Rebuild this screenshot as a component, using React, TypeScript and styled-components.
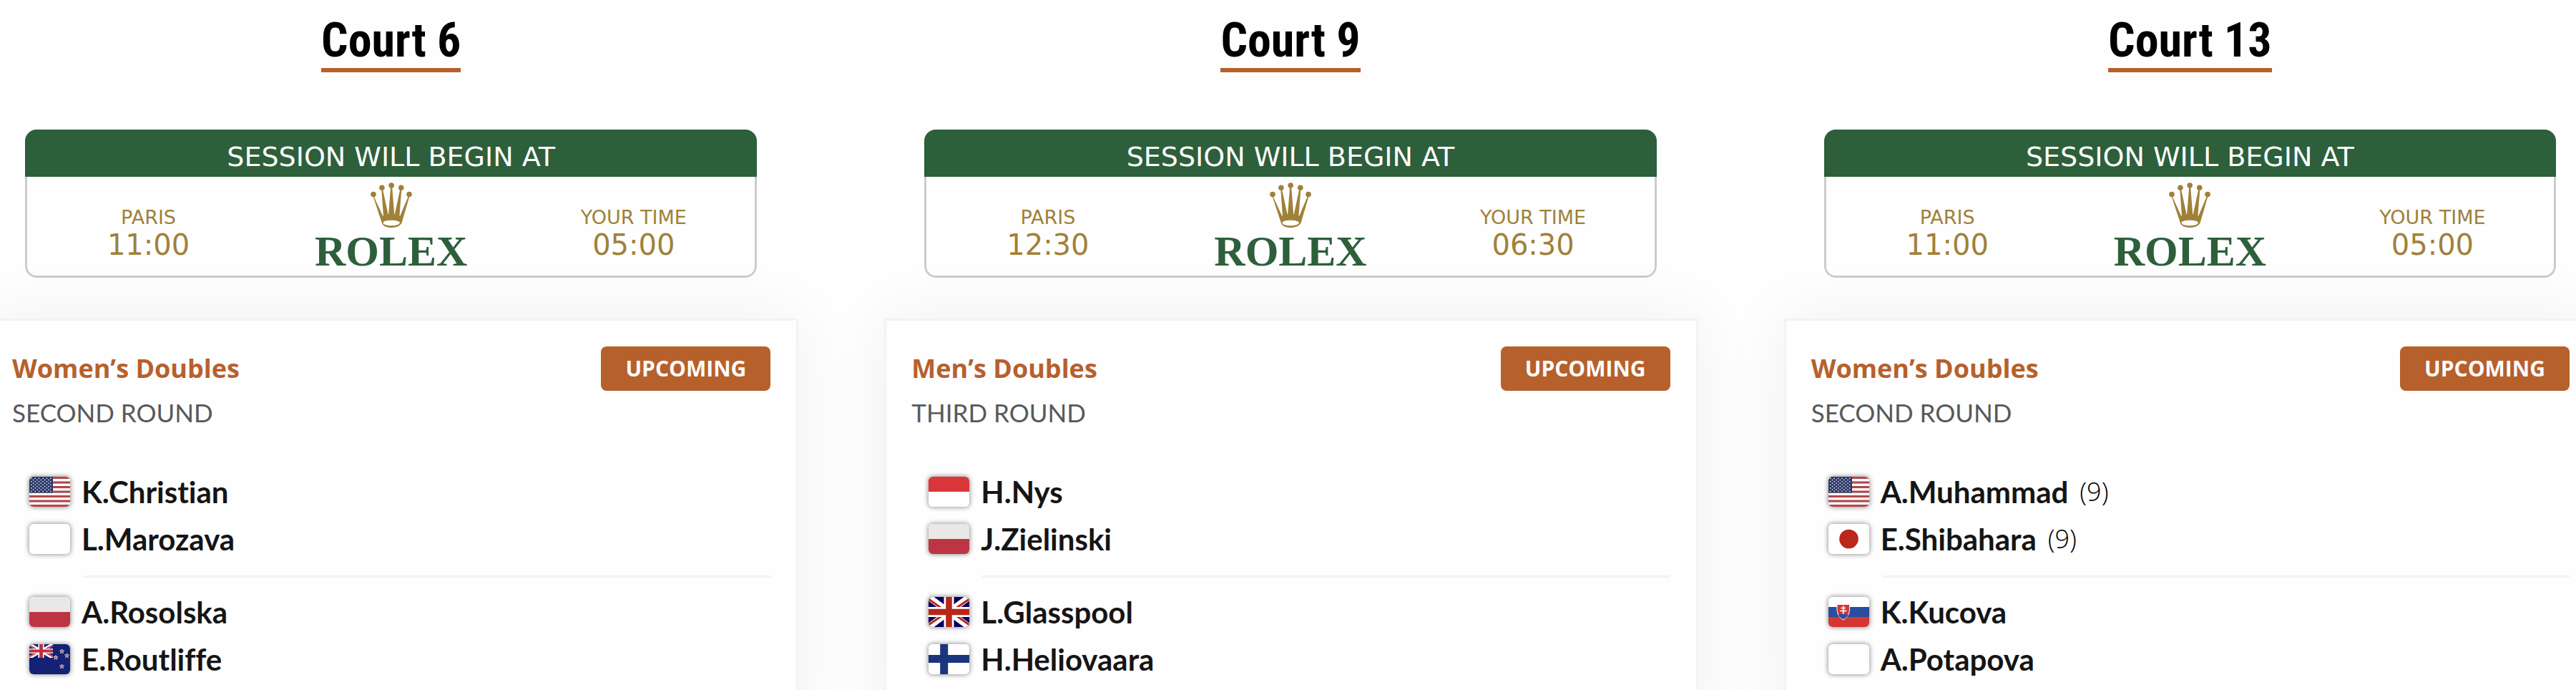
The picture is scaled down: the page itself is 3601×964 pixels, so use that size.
import React from "react";
import styled, { createGlobalStyle } from "styled-components";

const GlobalStyle = createGlobalStyle`
  *, *::before, *::after { box-sizing: border-box; }
  body { margin: 0; background: #fefefe; color: #151515; overflow: hidden; }
  h2, h3, p, ul { margin: 0; padding: 0; }
`;

const Page = styled.main`
  height: 100vh;
  overflow: hidden;
`;

const Track = styled.div`
  display: grid;
  grid-template-columns: repeat(3, minmax(0, 1fr));
  column-gap: 120px;
  margin: 0 -30px 0 -21px;
`;

const Court = styled.section`
  display: flex;
  flex-direction: column;
`;

const CourtHead = styled.header`
  display: flex;
  flex-direction: column;
  align-items: center;
  padding: 18px 58px 57px 56px;
`;

const CourtName = styled.h2`
  font: 700 66px/77px "Roboto Condensed", "Liberation Sans Narrow", Roboto, sans-serif;
  color: #000;
  border-bottom: 6px solid #b6602c;
  margin-bottom: 80px;
`;

const Banner = styled.div`
  width: 100%;
  border-radius: 16px;
  overflow: hidden;
`;

const BannerTitle = styled.p`
  padding: 14px 0 4px;
  background: #2d5f3b;
  color: #fff;
  text-align: center;
  font: 400 38px/48px "DejaVu Sans", sans-serif;
`;

const BannerBody = styled.div`
  display: grid;
  grid-template-columns: repeat(3, 1fr);
  height: 141px;
  border: 3px solid #cbcbcb;
  border-top: 0;
  border-radius: 0 0 16px 16px;
`;

const Clock = styled.div`
  display: flex;
  flex-direction: column;
  align-items: center;
  padding-top: 40px;
  color: #9f8139;
  font-family: "DejaVu Sans", sans-serif;
`;

const ClockLabel = styled.span`
  font-size: 27px;
  line-height: 34px;
`;

const ClockTime = styled.time`
  font-size: 40px;
  line-height: 42px;
`;

const Brand = styled.div`
  display: flex;
  flex-direction: column;
  align-items: center;
  padding-top: 8px;
`;

const BrandName = styled.span`
  font: 700 60px/66px "Liberation Serif", serif;
  color: #2d5f3b;
`;

const Card = styled.article`
  border: 3px solid #f3f3f3;
  background: #fefefe;
  box-shadow: 0 0 90px rgba(0, 0, 0, 0.06);
  padding: 36px 36px 60px 35px;
`;

const CardHead = styled.div`
  display: flex;
  justify-content: space-between;
  align-items: center;
`;

const EventName = styled.h3`
  font: 700 36px/62px "Open Sans", sans-serif;
  color: #b6602c;
`;

const Status = styled.span`
  min-width: 237px;
  padding: 0 32px;
  border-radius: 8px;
  background: #b6602c;
  color: #fff;
  text-align: center;
  font: 700 30px/62px "Open Sans", sans-serif;
`;

const Round = styled.p`
  font: 400 35px/60px Lato, sans-serif;
  color: #58595b;
  margin-bottom: 48px;
`;

const Team = styled.ul`
  list-style: none;
`;

const Divider = styled.hr`
  margin: 18px 0 15px 99px;
  border: 0;
  height: 3px;
  background: #f3f3f3;
`;

const Player = styled.li`
  display: flex;
  align-items: center;
  height: 66px;
  padding-left: 24px;
  font: 700 42px/66px Lato, sans-serif;
  font-variant-ligatures: none;
  color: #151515;
`;

const FlagBox = styled.span`
  display: block;
  width: 57px;
  height: 42px;
  margin-right: 16px;
  border-radius: 6px;
  overflow: hidden;
  background: #fff;
  box-shadow: 0 0 6px 1px rgba(0, 0, 0, 0.4);
  & > svg { display: block; width: 100%; height: 100%; }
`;

const Seed = styled.span`
  margin-left: 16px;
  font: 300 36px/66px "Open Sans", sans-serif;
  color: #000;
`;

type Country = "us" | "pl" | "nz" | "mc" | "gb" | "fi" | "jp" | "sk" | "none";

const rows = [0, 1, 2, 3, 4, 5, 6];

const UnionJack = ({ blue, red }: { blue: string; red: string }) => (
  <>
    <rect width="57" height="42" fill={blue} />
    <path d="M0 0L57 42M57 0L0 42" stroke="#fff" strokeWidth="9" />
    <path d="M0 3L24 20M33 22L57 39M57 3L35 18M22 24L0 39" stroke={red} strokeWidth="3" />
    <path d="M28.500 0V42M0 21H57" stroke="#fff" strokeWidth="14" />
    <path d="M28.500 0V42M0 21H57" stroke={red} strokeWidth="8.500" />
  </>
);

const Star = ({ x, y }: { x: number; y: number }) => (
  <path
    transform={`translate(${x} ${y})`}
    d="M0 -3L.8 -1H3L1.200 .4L1.900 2.700L0 1.300L-1.900 2.700L-1.200 .4L-3 -1H-.8Z"
    fill="#cf3340"
    stroke="#fff"
    strokeWidth=".7"
  />
);

const flags: Record<Country, React.ReactNode> = {
  none: null,
  us: (
    <>
      <rect width="57" height="42" fill="#fff" />
      {rows.map((r) => (
        <rect key={r} y={r * 6.5} width="57" height="3.100" fill="#b0484b" />
      ))}
      <rect width="33" height="22.500" fill="#2a3768" />
      {[0, 1, 2, 3, 4, 5, 6, 7, 8].map((r) =>
        rows.slice(0, r % 2 ? 5 : 6).map((c) => (
          <circle key={`${r}-${c}`} cx={(r % 2 ? 5.5 : 2.8) + c * 5.4} cy={2.4 + r * 2.25} r=".8" fill="#fff" />
        )),
      )}
    </>
  ),
  pl: (
    <>
      <rect width="57" height="21" fill="#e9e8e7" />
      <rect y="21" width="57" height="21" fill="#bd3544" />
    </>
  ),
  mc: (
    <>
      <rect width="57" height="42" fill="#fff" />
      <rect width="57" height="21" fill="#d9363c" />
    </>
  ),
  nz: (
    <>
      <rect width="57" height="42" fill="#132274" />
      <svg x="0" y="0" width="33" height="19" viewBox="0 0 57 42" preserveAspectRatio="none">
        <UnionJack blue="#132274" red="#c22f3c" />
      </svg>
      <Star x={45.5} y={10} />
      <Star x={52.5} y={16} />
      <Star x={37} y={18.5} />
      <Star x={45.5} y={31} />
    </>
  ),
  gb: <UnionJack blue="#06035f" red="#b82719" />,
  fi: (
    <>
      <rect width="57" height="42" fill="#fff" />
      <path d="M21.700 0V42M0 20.500H57" stroke="#1b357c" strokeWidth="11" />
    </>
  ),
  jp: (
    <>
      <rect width="57" height="42" fill="#fff" />
      <circle cx="28.500" cy="21" r="13.300" fill="#bb271a" />
    </>
  ),
  sk: (
    <>
      <rect width="57" height="42" fill="#fff" />
      <rect y="14" width="57" height="14" fill="#2b4d9f" />
      <rect y="28" width="57" height="14" fill="#d43732" />
      <path d="M11.500 10H30C30.500 20 30 27 20.700 32.500C11.500 27 11 20 11.500 10Z" fill="#fff" />
      <path d="M12.500 11H29C29.500 20 29 26 20.700 31.300C12.500 26 12 20 12.500 11Z" fill="#d43732" />
      <path d="M14 25.500C15.500 23.500 17.300 23.800 18 24.800C19.500 22.500 22 22.500 23.400 24.800C24.500 23.600 26 23.600 27.500 25.500C26 28 24 29.600 20.700 31.300C17.500 29.600 15.500 28 14 25.500Z" fill="#2b4d9f" />
      <path d="M20.700 12.500V24M17.500 15.500H24M16 19.500H25.500" stroke="#fff" strokeWidth="1.600" />
    </>
  ),
};

const Flag = ({ country }: { country: Country }) => (
  <FlagBox>
    <svg viewBox="0 0 57 42" preserveAspectRatio="none" aria-hidden="true">
      {flags[country]}
    </svg>
  </FlagBox>
);

const Crown = () => (
  <svg width="58" height="63" viewBox="0 0 175 190" fill="#9f8139" aria-hidden="true">
    <circle cx="12" cy="50" r="11.500" />
    <circle cx="48" cy="22" r="11.500" />
    <circle cx="88" cy="12" r="11.500" />
    <circle cx="129" cy="22" r="11.500" />
    <circle cx="163" cy="50" r="11.500" />
    <path
      fillRule="evenodd"
      d="M12 54L52 142L54 138L46 26H51L74 134L76 132L85 18H91L100 132L102 134L125 26H131L122 138L124 142L161 54L165 56L132 168C128 182 108 190 88 190C66 190 50 182 47 168L10 56ZM88 159C66 159 53 163 53 170C53 177 66 182 88 182C110 182 123 177 123 170C123 163 110 159 88 159Z"
    />
  </svg>
);

type Entry = { name: string; country: Country; seed?: number };

type CourtData = {
  court: string;
  paris: string;
  local: string;
  event: string;
  round: string;
  teams: [Entry[], Entry[]];
};

const courts: CourtData[] = [
  {
    court: "Court 6",
    paris: "11:00",
    local: "05:00",
    event: "Women’s Doubles",
    round: "SECOND ROUND",
    teams: [
      [{ name: "K.Christian", country: "us" }, { name: "L.Marozava", country: "none" }],
      [{ name: "A.Rosolska", country: "pl" }, { name: "E.Routliffe", country: "nz" }],
    ],
  },
  {
    court: "Court 9",
    paris: "12:30",
    local: "06:30",
    event: "Men’s Doubles",
    round: "THIRD ROUND",
    teams: [
      [{ name: "H.Nys", country: "mc" }, { name: "J.Zielinski", country: "pl" }],
      [{ name: "L.Glasspool", country: "gb" }, { name: "H.Heliovaara", country: "fi" }],
    ],
  },
  {
    court: "Court 13",
    paris: "11:00",
    local: "05:00",
    event: "Women’s Doubles",
    round: "SECOND ROUND",
    teams: [
      [{ name: "A.Muhammad", country: "us", seed: 9 }, { name: "E.Shibahara", country: "jp", seed: 9 }],
      [{ name: "K.Kucova", country: "sk" }, { name: "A.Potapova", country: "none" }],
    ],
  },
];

const TeamList = ({ players }: { players: Entry[] }) => (
  <Team>
    {players.map((p) => (
      <Player key={p.name}>
        <Flag country={p.country} />
        {p.name}
        {p.seed && <Seed>({p.seed})</Seed>}
      </Player>
    ))}
  </Team>
);

export default function App() {
  return (
    <>
      <GlobalStyle />
      <Page>
        <Track>
          {courts.map((c) => (
            <Court key={c.court}>
              <CourtHead>
                <CourtName>{c.court}</CourtName>
                <Banner>
                  <BannerTitle>SESSION WILL BEGIN AT</BannerTitle>
                  <BannerBody>
                    <Clock>
                      <ClockLabel>PARIS</ClockLabel>
                      <ClockTime>{c.paris}</ClockTime>
                    </Clock>
                    <Brand>
                      <Crown />
                      <BrandName>ROLEX</BrandName>
                    </Brand>
                    <Clock>
                      <ClockLabel>YOUR TIME</ClockLabel>
                      <ClockTime>{c.local}</ClockTime>
                    </Clock>
                  </BannerBody>
                </Banner>
              </CourtHead>
              <Card>
                <CardHead>
                  <EventName>{c.event}</EventName>
                  <Status>UPCOMING</Status>
                </CardHead>
                <Round>{c.round}</Round>
                <TeamList players={c.teams[0]} />
                <Divider />
                <TeamList players={c.teams[1]} />
              </Card>
            </Court>
          ))}
        </Track>
      </Page>
    </>
  );
}
